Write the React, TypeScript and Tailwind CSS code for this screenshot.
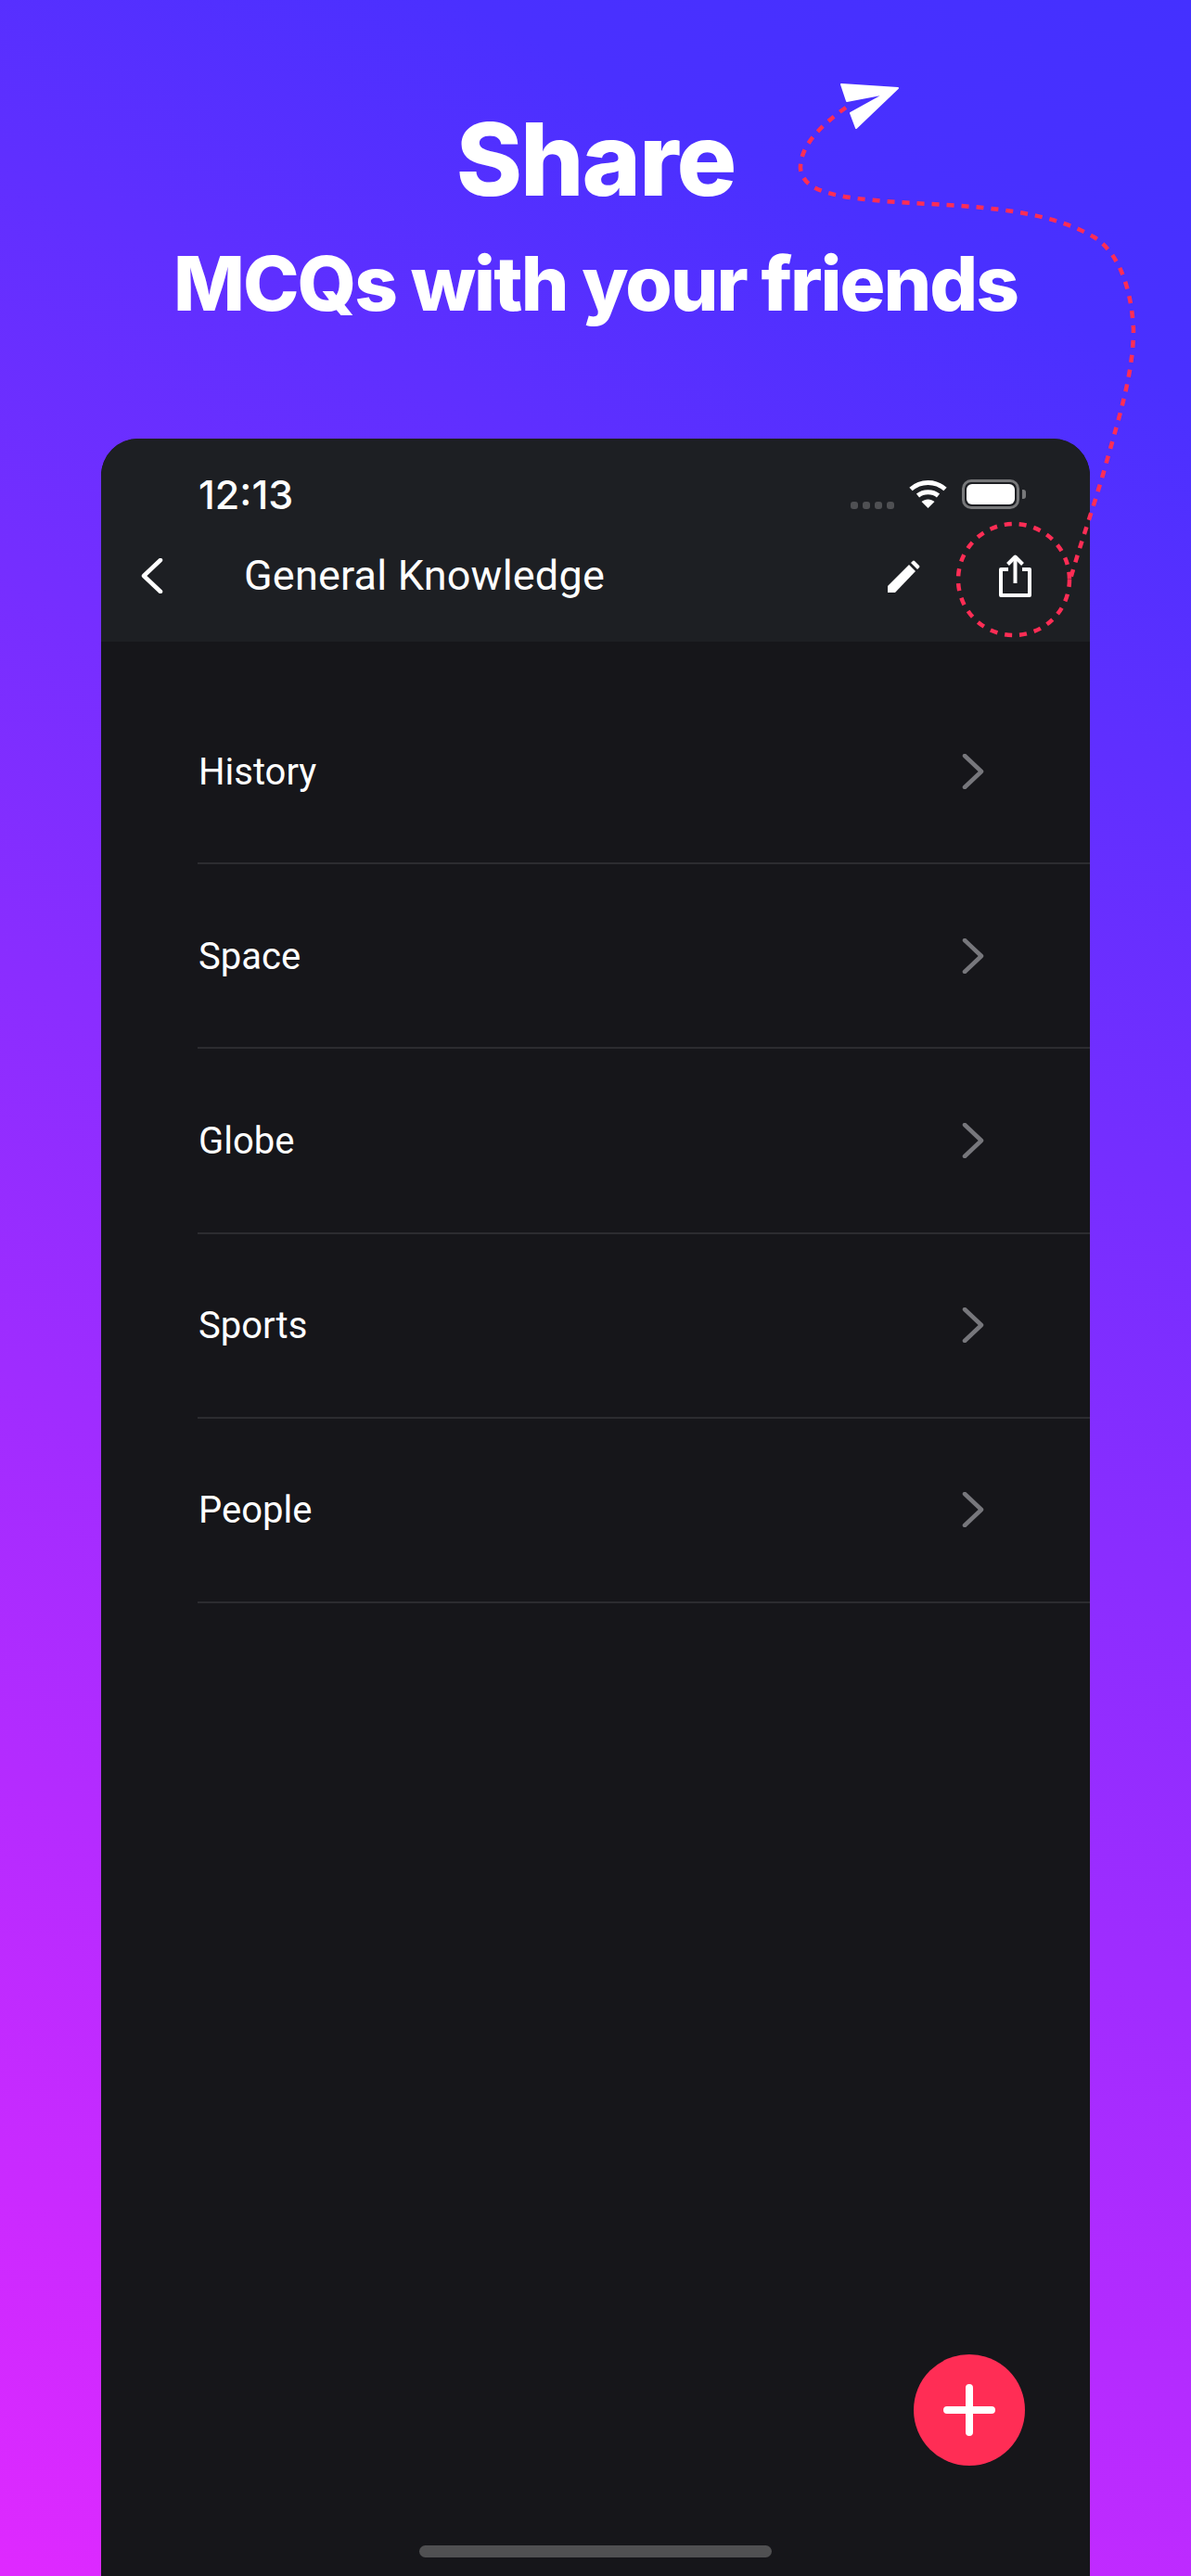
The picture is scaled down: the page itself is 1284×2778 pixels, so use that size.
import React from 'react';

const topics = ['History', 'Space', 'Globe', 'Sports', 'People'];

function Chevron({ className, strokeWidth }: { className: string; strokeWidth: number }) {
  return (
    <svg viewBox="0 0 24 38" fill="none" stroke="currentColor" strokeWidth={strokeWidth} strokeLinecap="round" strokeLinejoin="round" className={className}>
      <path d="M3 2 L21 19 L3 36" />
    </svg>
  );
}

function StatusIcons() {
  return (
    <div className="flex items-start">
      <div className="mt-[24px] flex gap-[5px]">
        {[0, 1, 2, 3].map((i) => (
          <div key={i} className="h-[8px] w-[8px] rounded-[3px] bg-[#4f5053]" />
        ))}
      </div>
      <svg viewBox="0 0 41 31" className="ml-[16px] h-[31px] w-[41px]" fill="none" stroke="white">
        <path d="M2 10.5 C12.5 1 28.5 1 39 10.5" strokeWidth="5" />
        <path d="M9.5 17.5 C15.5 12.5 25.5 12.5 31.5 17.5" strokeWidth="5" />
        <path d="M20.5 31 L13.5 24 C17.5 20.5 23.5 20.5 27.5 24 Z" fill="white" stroke="none" />
      </svg>
      <div className="ml-[16px] flex items-center">
        <div className="h-[32px] w-[62px] rounded-[10px] border-[3px] border-[#77787a] p-[2px]">
          <div className="h-full w-full rounded-[6px] bg-white" />
        </div>
        <div className="ml-[3px] h-[10px] w-[4px] rounded-r-[3px] bg-[#77787a]" />
      </div>
    </div>
  );
}

export default function App() {
  return (
    <div className="relative flex h-[2778px] w-[1284px] flex-col overflow-hidden bg-[linear-gradient(208deg,#4430ff_0%,#4a30ff_12%,#df29ff_100%)] font-['Inter',sans-serif]">
      <div className="flex h-[473px] flex-col items-center pt-[116px] text-white">
        <h1 className="text-[108px] leading-[112px] font-extrabold tracking-[-2px]">Share</h1>
        <h2 className="mt-[30px] text-[81.5px] leading-[96px] font-extrabold tracking-[-2px]">MCQs with your friends</h2>
      </div>

      <div className="mx-[109px] flex min-h-0 flex-1 flex-col overflow-hidden rounded-t-[40px] bg-[#16161a]">
        <div className="h-[219px] bg-[#1d1f23]">
          <div className="flex h-[92px] items-start justify-between pt-[44px] pr-[69px] pl-[105px]">
            <span className="-mt-[8px] text-[43px] leading-[48px] font-medium text-white">12:13</span>
            <StatusIcons />
          </div>
          <div className="mt-[16px] flex h-[80px] items-center pr-[63px] pl-[43px] font-['Roboto',sans-serif] text-white">
            <Chevron className="h-[38px] w-[24px] rotate-180" strokeWidth={4.5} />
            <span className="ml-[87px] flex-1 text-[45px] leading-[56px] font-normal tracking-[0.2px]">General Knowledge</span>
            <svg viewBox="0 0 35 35" className="h-[35px] w-[35px]" fill="white">
              <path d="M0 28 L23 5 L30 12 L8 35 L0 35 Z" />
              <path d="M25 3 L27 1 Q28 0 29 1 L34 6 Q35 7 34 8 L32 10 Z" />
            </svg>
            <svg viewBox="0 0 35 47" className="ml-[85px] h-[47px] w-[35px]" fill="none" stroke="white" strokeWidth="4" strokeLinejoin="round">
              <path d="M10 16 H2 V44 H33 V16 H25" />
              <path d="M17.5 31 V3" />
              <path d="M9.5 10.5 L17.5 2.5 L25.5 10.5" />
            </svg>
          </div>
        </div>

        <div className="pt-[41px] pl-[104px] font-['Roboto',sans-serif]">
          {topics.map((topic) => (
            <div key={topic} className="flex h-[199.2px] items-center justify-between border-b-2 border-[#2c2c30] pr-[114px] pl-[1px]">
              <span className="pt-[2px] text-[40px] leading-[48px] font-normal text-white">{topic}</span>
              <Chevron className="h-[38px] w-[24px] text-[#77777c]" strokeWidth={4.5} />
            </div>
          ))}
        </div>

        <div className="mt-auto mb-[20px] h-[13px] w-[380px] self-center rounded-full bg-[#505052]" />
      </div>

      <div className="absolute top-[2539px] left-[985px] flex h-[120px] w-[120px] items-center justify-center rounded-full bg-[#ff2d55]">
        <svg viewBox="0 0 56 56" className="h-[56px] w-[56px]" stroke="white" strokeWidth="8" strokeLinecap="round">
          <path d="M4 28 H52 M28 4 V52" />
        </svg>
      </div>

      <svg viewBox="0 0 1284 2778" className="pointer-events-none absolute inset-0 h-[2778px] w-[1284px]" fill="none">
        <path
          d="M912 116 C885 135 862 158 863 182 C865 198 880 206 905 211 C945 219 1010 219 1060 224 C1110 229 1150 238 1180 256 C1208 274 1220 315 1222 355 C1222 400 1208 445 1193 498 C1180 545 1165 585 1153 628"
          stroke="#ff2d55"
          strokeWidth="4.5"
          strokeDasharray="8 8"
        />
        <circle cx="1093" cy="625" r="60" stroke="#ff2d55" strokeWidth="4.5" strokeDasharray="8 8" />
        <path d="M907 91 L968 95 L923 138 L917 122 L955 101 L913 109 Z" fill="white" stroke="white" strokeWidth="2" strokeLinejoin="round" />
      </svg>
    </div>
  );
}
